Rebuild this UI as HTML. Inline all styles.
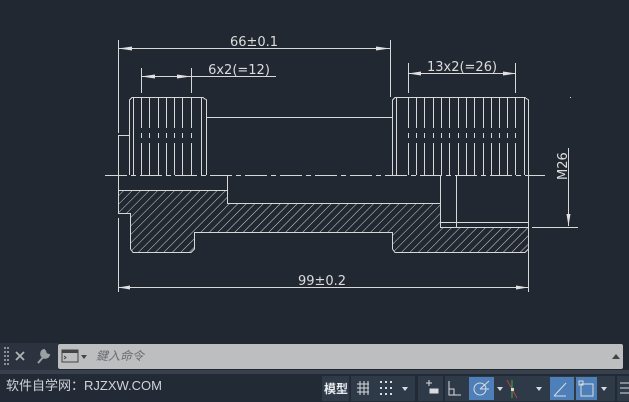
<!DOCTYPE html>
<html><head><meta charset="utf-8"><style>
html,body{margin:0;padding:0;width:629px;height:402px;overflow:hidden;background:#222831;font-family:"Liberation Sans","Noto Sans CJK SC",sans-serif}
svg{position:absolute;left:0;top:0}
</style></head><body>
<svg width="629" height="402" viewBox="0 0 629 402">
<defs>
<pattern id="h" patternUnits="userSpaceOnUse" width="6" height="6" patternTransform="rotate(45)">
<line x1="0" y1="0" x2="0" y2="6" stroke="#d6d6d6" stroke-width="1"/>
</pattern>
</defs>
<rect width="629" height="402" fill="#222831"/>
<g stroke="#d8d8d8" stroke-width="1" fill="none" shape-rendering="crispEdges">
<line x1="118.5" y1="40" x2="118.5" y2="133"/>
<line x1="118.5" y1="135.5" x2="129" y2="135.5"/>
<line x1="118.5" y1="135" x2="118.5" y2="213"/>
<line x1="118.5" y1="218" x2="118.5" y2="292"/>
<line x1="390.5" y1="40" x2="390.5" y2="97"/>
<line x1="528.5" y1="175" x2="528.5" y2="292"/>
<line x1="118" y1="48.5" x2="390" y2="48.5"/>
<line x1="141.5" y1="68" x2="141.5" y2="93"/>
<line x1="191.5" y1="68" x2="191.5" y2="93"/>
<line x1="141" y1="76.5" x2="276" y2="76.5"/>
<line x1="408.5" y1="63" x2="408.5" y2="93"/>
<line x1="515.5" y1="63" x2="515.5" y2="93"/>
<line x1="408" y1="73.5" x2="516" y2="73.5"/>
<line x1="118" y1="287.5" x2="528" y2="287.5"/>
<line x1="568.5" y1="148" x2="568.5" y2="226"/>
<line x1="532" y1="227.5" x2="578" y2="227.5"/>
<path d="M129.5 175 V100 L132 97.5 H203 L206.5 100 V175"/>
<line x1="133.5" y1="98" x2="133.5" y2="175"/>
<line x1="201.5" y1="98" x2="201.5" y2="175"/>
<line x1="206" y1="117.5" x2="392" y2="117.5"/>
<path d="M392.5 175 V100 L395 97.5 H525 L528.5 100 V175"/>
<line x1="396.5" y1="98" x2="396.5" y2="175"/>
<line x1="524.5" y1="98" x2="524.5" y2="175"/>
<path d="M105 175.5 H545" stroke-dasharray="22 4 5 4"/>
<line x1="227.5" y1="175" x2="227.5" y2="203"/>
<line x1="440.5" y1="175" x2="440.5" y2="222"/>
<line x1="456.5" y1="175" x2="456.5" y2="227"/>
<line x1="440" y1="222.5" x2="528" y2="222.5"/>
</g>
<g stroke="#d8d8d8" stroke-width="1" shape-rendering="crispEdges">
<path d="M141.5 98V128M141.5 133V138M141.5 143V175M149.5 98V128M149.5 133V138M149.5 143V175M158.5 98V128M158.5 133V138M158.5 143V175M166.5 98V128M166.5 133V138M166.5 143V175M174.5 98V128M174.5 133V138M174.5 143V175M182.5 98V128M182.5 133V138M182.5 143V175M191.5 98V128M191.5 133V138M191.5 143V175"/>
<path d="M408.5 98V128M408.5 133V138M408.5 143V175M416.5 98V128M416.5 133V138M416.5 143V175M424.5 98V128M424.5 133V138M424.5 143V175M433.5 98V128M433.5 133V138M433.5 143V175M441.5 98V128M441.5 133V138M441.5 143V175M449.5 98V128M449.5 133V138M449.5 143V175M458.5 98V128M458.5 133V138M458.5 143V175M466.5 98V128M466.5 133V138M466.5 143V175M474.5 98V128M474.5 133V138M474.5 143V175M483.5 98V128M483.5 133V138M483.5 143V175M491.5 98V128M491.5 133V138M491.5 143V175M499.5 98V128M499.5 133V138M499.5 143V175M507.5 98V128M507.5 133V138M507.5 143V175M515.5 98V128M515.5 133V138M515.5 143V175"/>
</g>
<path d="M118.5 190.5 H227.5 V203.5 H440.5 V227.5 H528.5 V249 L525 252.5 H395 L392.5 249 V232.5 H194.5 V249 L191 252.5 H133 L130.5 249 V213.5 H118.5 Z" fill="url(#h)" stroke="#d8d8d8" stroke-width="1"/>
<g fill="#e0e0e0">
<polygon points="118,48.5 132,46.5 132,50.5"/>
<polygon points="390,48.5 376,46.5 376,50.5"/>
<polygon points="141,76.5 155,74.5 155,78.5"/>
<polygon points="191,76.5 177,74.5 177,78.5"/>
<polygon points="408,73.5 421,71.5 421,75.5"/>
<polygon points="516,73.5 503,71.5 503,75.5"/>
<polygon points="118,287.5 130,285.5 130,289.5"/>
<polygon points="528,287.5 516,285.5 516,289.5"/>
<polygon points="568.5,226 566.5,214 570.5,214"/>
<rect x="570" y="97" width="1" height="1"/>
</g>
<g fill="#dcdcdc" font-family="'DejaVu Sans','Liberation Sans',sans-serif" font-size="13">
<text x="254" y="46" text-anchor="middle">66±0.1</text>
<text x="239" y="74" text-anchor="middle">6x2(=12)</text>
<text x="462" y="71" text-anchor="middle">13x2(=26)</text>
<text x="322" y="285" text-anchor="middle">99±0.2</text>
<text transform="translate(567,180) rotate(-90)">M26</text>
</g>
<rect x="0" y="343" width="58" height="27" fill="#2c333e"/>
<rect x="58" y="344" width="565" height="25" rx="2" fill="#bdbebf"/>
<rect x="0" y="370" width="629" height="4" fill="#37404c"/>
<g fill="#8a9098"><rect x="4" y="347" width="2" height="2"/><rect x="7" y="347" width="2" height="2"/><rect x="4" y="351" width="2" height="2"/><rect x="7" y="351" width="2" height="2"/><rect x="4" y="355" width="2" height="2"/><rect x="7" y="355" width="2" height="2"/><rect x="4" y="359" width="2" height="2"/><rect x="7" y="359" width="2" height="2"/><rect x="4" y="363" width="2" height="2"/><rect x="7" y="363" width="2" height="2"/></g>
<path d="M16 352 L24 360 M24 352 L16 360" stroke="#b0b4b8" stroke-width="1.8"/>
<path d="M38 363 L46 354 M44 350 a4 4 0 1 0 5 5 l-3 -1 -1 -3z" stroke="#9aa0a6" stroke-width="2" fill="#9aa0a6"/>
<rect x="62" y="350" width="16" height="12" fill="none" stroke="#444" stroke-width="1"/>
<rect x="62" y="350" width="16" height="3" fill="#444"/>
<path d="M64 356 l2 1.5 -2 1.5" stroke="#444" fill="none"/>
<polygon points="81,355 87,355 84,359" fill="#444"/>
<text x="96" y="360" font-size="12" font-style="italic" fill="#6a6d70" font-family="'Liberation Sans','Noto Sans CJK SC',sans-serif">鍵入命令</text>
<polygon points="612,359 620,359 616,354" fill="#444"/>
<rect x="0" y="374" width="629" height="28" fill="#222a35"/>
<text x="6" y="390" font-size="13" fill="#d0d4d8" font-family="'Liberation Sans','Noto Sans CJK SC',sans-serif">软件自学网：RJZXW.COM</text>
<g fill="#2f3a48">
<rect x="322" y="376" width="27" height="25"/>
<rect x="351" y="376" width="64" height="25"/>
<rect x="418" y="376" width="25" height="25"/>
<rect x="445" y="376" width="170" height="25"/>
<rect x="617" y="376" width="12" height="25"/>
</g>
<g fill="#4f7fb8">
<rect x="469" y="377" width="25" height="23"/>
<rect x="550" y="377" width="24" height="23"/>
<rect x="576" y="377" width="21" height="23"/>
</g>
<text x="324" y="393" font-size="12" fill="#e8ecf0" font-weight="bold" font-family="'Noto Sans CJK SC',sans-serif">模型</text>
<g stroke="#d8dce0" stroke-width="1" fill="none">
<path d="M357 384h12M357 388h12M357 392h12M360 381v14M364 381v14M368 381v14"/>
<path d="M426 383h6M429 380v6"/><rect x="430" y="389" width="8" height="4" fill="#d8dce0"/>
<path d="M449 381v14h12"/><path d="M449 389h5v6"/>
<circle cx="480" cy="389" r="6"/><path d="M480 389 L489 381 M480 389h9"/>
<path d="M507 380 L517 398" stroke="#c04040"/><path d="M512 380 L512 398" stroke="#40b040"/>
<path d="M554 396 L566 383 M554 396h12"/>
<rect x="581" y="384" width="12" height="12"/>
<path d="M620 383h9M620 388h9M620 393h9"/>
</g>
<g fill="#d8dce0">
<rect x="380" y="381" width="2" height="2"/><rect x="385" y="381" width="2" height="2"/><rect x="390" y="381" width="2" height="2"/>
<rect x="380" y="387" width="2" height="2"/><rect x="385" y="387" width="2" height="2"/><rect x="390" y="387" width="2" height="2"/>
<rect x="380" y="393" width="2" height="2"/><rect x="385" y="393" width="2" height="2"/><rect x="390" y="393" width="2" height="2"/>
<rect x="579" y="381" width="4" height="4" fill="none" stroke="#d8dce0"/>
<rect x="511" y="388" width="3" height="3"/>
<polygon points="402,387 408,387 405,391"/>
<polygon points="497,387 503,387 500,391"/>
<polygon points="536,387 542,387 539,391"/>
<polygon points="601,387 607,387 604,391"/>
</g>
</svg>
</body></html>
